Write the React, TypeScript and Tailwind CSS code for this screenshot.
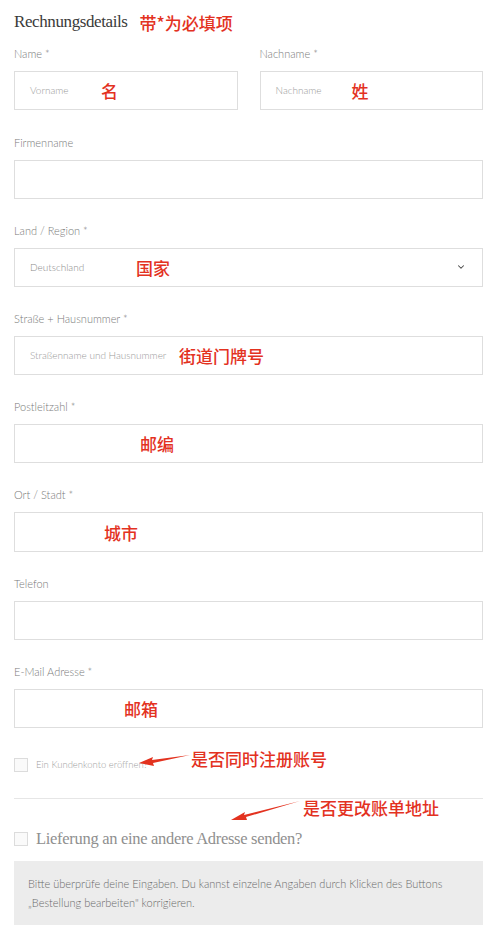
import { ChevronDown } from 'lucide-react';

const sans = { fontFamily: 'Lato, "Liberation Sans", sans-serif' };
const cjk = { fontFamily: '"Noto Sans CJK SC", sans-serif' };

function Note({ children, className = '' }: { children: React.ReactNode; className?: string }) {
  return (
    <span style={cjk} className={`text-[17px] font-medium leading-none text-[#e3321f] ${className}`}>
      {children}
    </span>
  );
}

function Field({ label, placeholder, note, noteX, h = 'h-[39px]' }: { label: string; placeholder?: string; note?: string; noteX?: string; h?: string }) {
  return (
    <div className="flex flex-col">
      <label className="text-[11px] font-light leading-none text-[#7a7a7a]">{label}</label>
      <div className={`relative mt-[12px] flex ${h} items-center border border-[#dedede] bg-white px-[15px]`}>
        {placeholder && <span className="text-[10px] font-light text-[#9a9a9a]">{placeholder}</span>}
        {note && <Note className={`absolute top-1/2 -translate-y-1/2 ${noteX}`}>{note}</Note>}
      </div>
    </div>
  );
}

export default function App() {
  return (
    <div style={sans} className="relative min-h-[930px] w-[492px] bg-white pl-[14px] pr-[9px] pt-[9px]">
      {/* Header */}
      <div className="flex items-center gap-[12px]">
        <h2 style={{ fontFamily: '"Liberation Serif", serif' }} className="text-[17px] tracking-[-0.4px] text-[#3a3a3a]">
          Rechnungsdetails
        </h2>
        <Note className="mt-[2px]">带*为必填项</Note>
      </div>

      <div className="mt-[13px] grid grid-cols-2 gap-x-[22px]">
        <Field label="Name *" placeholder="Vorname" note="名" noteX="left-[86px]" />
        <Field label="Nachname *" placeholder="Nachname" note="姓" noteX="left-[91px]" />
      </div>

      <div className="mt-[27px] flex flex-col gap-[26px]">
        <Field label="Firmenname" />
        <div className="flex flex-col">
          <label className="text-[11px] font-light leading-none text-[#7a7a7a]">Land / Region *</label>
          <div className="relative mt-[12px] flex h-[39px] items-center justify-between border border-[#dedede] px-[15px]">
            <span className="text-[10px] font-light text-[#8a8a8a]">Deutschland</span>
            <Note className="absolute left-[121px] top-1/2 -translate-y-1/2">国家</Note>
            <ChevronDown size={10} strokeWidth={2.5} className="mr-[1px] text-[#444]" />
          </div>
        </div>
        <Field label="Straße + Hausnummer *" placeholder="Straßenname und Hausnummer" note="街道门牌号" noteX="left-[164px]" />
        <Field label="Postleitzahl *" note="邮编" noteX="left-[125px]" />
        <Field label="Ort / Stadt *" note="城市" noteX="left-[89px]" h="h-[40px]" />
        <Field label="Telefon" />
        <Field label="E-Mail Adresse *" note="邮箱" noteX="left-[109px]" />
      </div>

      {/* Account checkbox */}
      <div className="mt-[30px] flex items-center gap-[8px]">
        <span className="h-[14px] w-[14px] border border-[#dcdcdc] bg-[#fafafa]" />
        <span className="text-[9.5px] font-light text-[#a0a0a0]">Ein Kundenkonto eröffnen?</span>
      </div>

      <div className="mt-[26px] h-px bg-[#e6e6e6]" />

      <div className="mt-[28px] flex items-center gap-[8px]">
        <span className="h-[14px] w-[14px] border border-[#dcdcdc] bg-[#fafafa]" />
        <span style={{ fontFamily: '"Liberation Serif", serif' }} className="text-[16.5px] tracking-[-0.3px] text-[#8f8f8f]">
          Lieferung an eine andere Adresse senden?
        </span>
      </div>

      <div className="mt-[9px] bg-[#ececec] px-[14px] py-[13px] text-[11px] font-light leading-[19px] text-[#6a6a6a]">
        Bitte überprüfe deine Eingaben. Du kannst einzelne Angaben durch Klicken des Buttons
        <br />„Bestellung bearbeiten" korrigieren.
      </div>

      {/* Annotations */}
      <Note className="absolute left-[191px] top-[750px]">是否同时注册账号</Note>
      <Note className="absolute left-[303px] top-[799px]">是否更改账单地址</Note>
      <svg className="absolute left-0 top-0" width="492" height="930" viewBox="0 0 492 930">
        <path d="M190 755 L152 760 L153 757 L139 763 L154 766 L153 763 Z" fill="#e3321f" />
        <path d="M300 801 L244 815 L245 812 L231 820 L247 820 L246 817 Z" fill="#e3321f" />
      </svg>
    </div>
  );
}
